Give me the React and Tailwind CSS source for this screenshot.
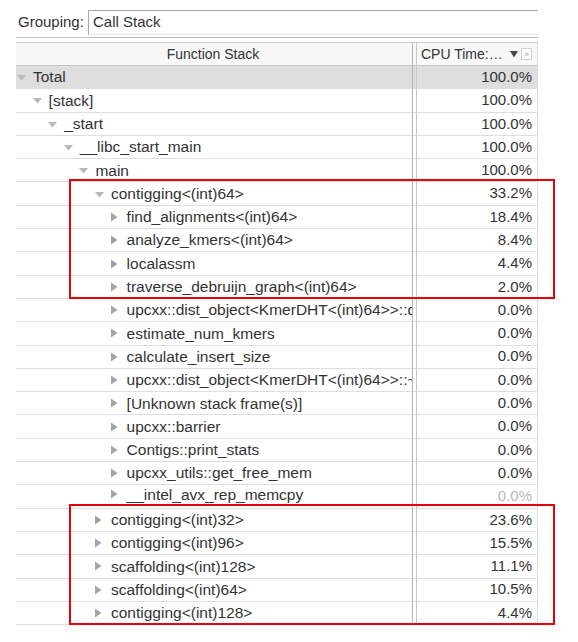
import React from 'react';

const rows = [
  { level: 0, name: 'Total', value: '100.0%', open: true, selected: true },
  { level: 1, name: '[stack]', value: '100.0%', open: true },
  { level: 2, name: '_start', value: '100.0%', open: true },
  { level: 3, name: '__libc_start_main', value: '100.0%', open: true },
  { level: 4, name: 'main', value: '100.0%', open: true },
  { level: 5, name: 'contigging<(int)64>', value: '33.2%', open: true },
  { level: 6, name: 'find_alignments<(int)64>', value: '18.4%' },
  { level: 6, name: 'analyze_kmers<(int)64>', value: '8.4%' },
  { level: 6, name: 'localassm', value: '4.4%' },
  { level: 6, name: 'traverse_debruijn_graph<(int)64>', value: '2.0%' },
  { level: 6, name: 'upcxx::dist_object<KmerDHT<(int)64>>::dist_object', value: '0.0%' },
  { level: 6, name: 'estimate_num_kmers', value: '0.0%' },
  { level: 6, name: 'calculate_insert_size', value: '0.0%' },
  { level: 6, name: 'upcxx::dist_object<KmerDHT<(int)64>>::~dist_object', value: '0.0%' },
  { level: 6, name: '[Unknown stack frame(s)]', value: '0.0%' },
  { level: 6, name: 'upcxx::barrier', value: '0.0%' },
  { level: 6, name: 'Contigs::print_stats', value: '0.0%' },
  { level: 6, name: 'upcxx_utils::get_free_mem', value: '0.0%' },
  { level: 6, name: '__intel_avx_rep_memcpy', value: '0.0%', faded: true },
  { level: 5, name: 'contigging<(int)32>', value: '23.6%' },
  { level: 5, name: 'contigging<(int)96>', value: '15.5%' },
  { level: 5, name: 'scaffolding<(int)128>', value: '11.1%' },
  { level: 5, name: 'scaffolding<(int)64>', value: '10.5%' },
  { level: 5, name: 'contigging<(int)128>', value: '4.4%' },
];

function Arrow({ open }) {
  if (open) {
    return (
      <svg width="16" height="10" viewBox="0 0 16 10" className="shrink-0">
        <path d="M0 3h9l-4.5 5.5z" fill="#b8b8b8" />
      </svg>
    );
  }
  return (
    <svg width="16" height="12" viewBox="0 0 16 12" className="shrink-0">
      <path d="M0 1.5v9l6.5-4.5z" fill="#a3a3a3" />
    </svg>
  );
}

function Row({ row }) {
  const bg = row.selected ? 'bg-[#dedede]' : 'bg-white';
  return (
    <div className={`flex h-[23.3px] ${bg}`}>
      <div className="w-[397px] flex items-center overflow-hidden whitespace-nowrap border-b border-r border-b-[#dedede] border-r-[#b4b4b4] pl-[1px]">
        {/* indent comes from the tree depth */}
        <div
          className={`flex items-center shrink-0 ${row.faded ? '-translate-y-[2px]' : ''}`}
          style={{ paddingLeft: row.level * 15.6 }}
        >
          <Arrow open={row.open} />
          <span className="leading-none text-[15.5px]">{row.name}</span>
        </div>
      </div>
      <div className="w-[3px] border-b border-[#dedede]" />
      <div
        className={`w-[122px] flex items-center justify-end pr-[5px] border-b border-l border-r border-b-[#dedede] border-l-[#c8c8c8] border-r-[#dadada] ${
          row.faded ? 'text-[#b8b8b8]' : ''
        }`}
      >
        {row.value}
      </div>
    </div>
  );
}

export default function App() {
  return (
    <div className="relative w-[578px] h-[642px] bg-white text-[15px] text-[#333] font-['Liberation_Sans',Arial,sans-serif]">
      {/* Grouping selector */}
      <div className="flex items-center pt-[10px] pl-[18px] pr-[40px]">
        <span className="w-[70px] shrink-0">Grouping:</span>
        <div className="flex-1 h-[25px] flex items-center pl-[4px] border-t border-l border-b border-t-[#a8a8a8] border-l-[#a8a8a8] border-b-[#e4e4e4]">
          Call Stack
        </div>
      </div>

      {/* Table */}
      <div className="ml-[16px] w-[522px] mt-[2px]">
        <div className="border-t border-[#bdbdbd] h-[5px]" />
        <div className="flex h-[24px] bg-[#f8f8f8] border-t border-[#cbcbcb]">
          <div className="w-[397px] flex items-center justify-center border-b border-r border-b-[#c4c4c4] border-r-[#b4b4b4] text-[14px] pr-[2px]">
            Function Stack
          </div>
          <div className="w-[3px] border-b border-[#c4c4c4]" />
          <div className="w-[122px] flex items-center pl-[4px] pr-[5px] border-b border-l border-r border-b-[#c4c4c4] border-l-[#c8c8c8] border-r-[#dadada] text-[14px]">
            <span className="flex-1 whitespace-nowrap">CPU Time:…</span>
            <svg width="8" height="8" viewBox="0 0 8 8" className="mr-[3px]">
              <path d="M0 1h8L4 7.5z" fill="#444" />
            </svg>
            <span className="w-[11px] h-[12px] border border-[#d0d0d0] bg-white flex items-center justify-center text-[9px] leading-none text-[#999]">
              »
            </span>
          </div>
        </div>
        {rows.map((row, i) => (
          <Row key={i} row={row} />
        ))}
      </div>

      {/* annotation boxes */}
      <div className="absolute left-[69px] top-[179px] w-[486px] h-[120px] border-2 border-[#e8000b] pointer-events-none" />
      <div className="absolute left-[69px] top-[504px] w-[486px] h-[121px] border-2 border-[#e8000b] pointer-events-none" />
    </div>
  );
}
